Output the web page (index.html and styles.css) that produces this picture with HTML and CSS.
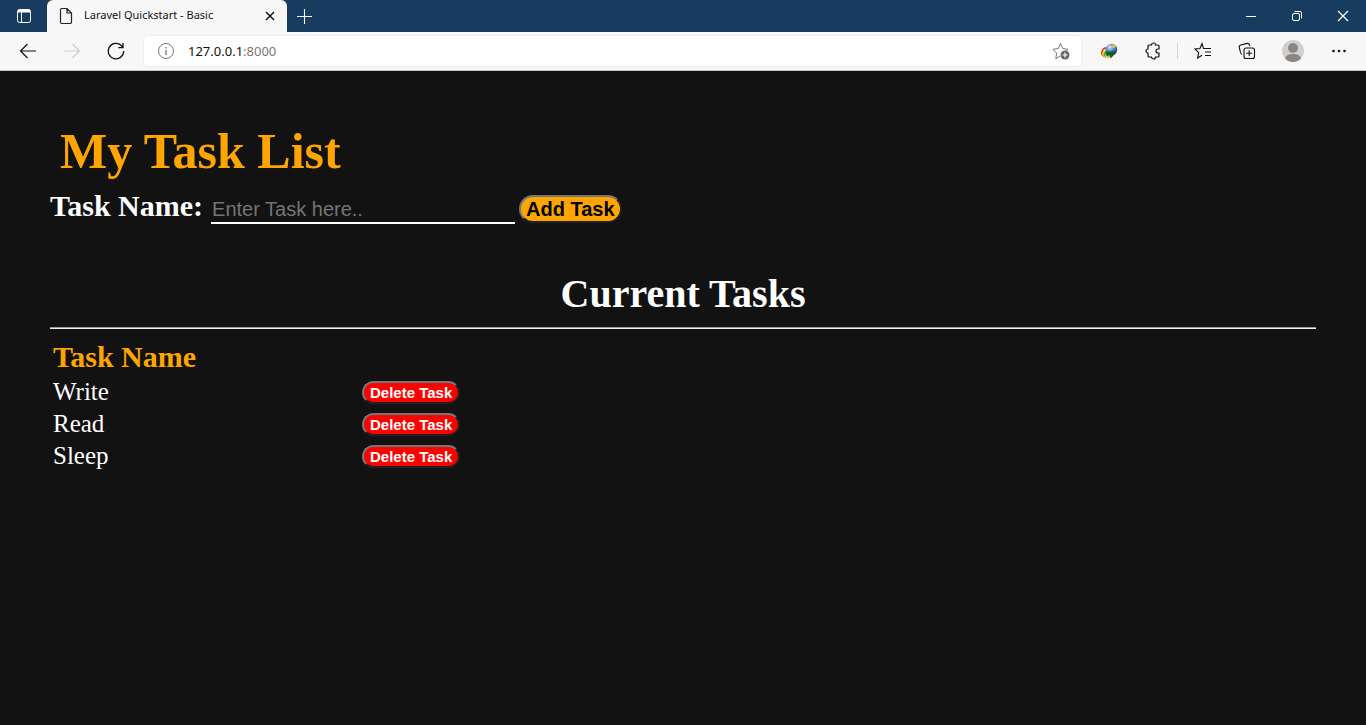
FILE: index.html
```html
<!DOCTYPE html>
<html lang="en">
<head>
<meta charset="utf-8">
<title>Laravel Quickstart - Basic</title>
<link rel="stylesheet" href="styles.css">
</head>
<body>
<header class="browser">
  <div class="titlebar">
    <button class="tab-actions" aria-label="Tab actions">
      <svg width="16" height="16" viewBox="0 0 16 16" fill="none" stroke="#fff"><rect x="1.500" y="1.500" width="13" height="13" rx="2"/><path d="M2 3h12" stroke-width="3"/><path d="M5.500 4v10"/></svg>
    </button>
    <div class="tab">
      <svg width="14" height="18" viewBox="0 0 14 18" fill="none" stroke="#222" stroke-width="1.200"><path d="M3 1.500h5l4.500 4.500v9a1.500 1.500 0 0 1-1.500 1.500H3A1.500 1.500 0 0 1 1.500 15V3A1.500 1.500 0 0 1 3 1.500zM8 1.500V6h4.500"/></svg>
      <span class="tab-title">Laravel Quickstart - Basic</span>
      <button class="tab-close" aria-label="Close tab">
        <svg width="10" height="10" viewBox="0 0 10 10" stroke="#111" stroke-width="1.500"><path d="M1 1l8 8M9 1l-8 8"/></svg>
      </button>
    </div>
    <button class="new-tab" aria-label="New tab">
      <svg width="15" height="15" viewBox="0 0 15 15" stroke="#fff" stroke-width="1.100"><path d="M7.500 0v15M0 7.500h15"/></svg>
    </button>
    <div class="window-controls">
      <button aria-label="Minimize"><svg width="12" height="12" viewBox="0 0 12 12" stroke="#fff"><path d="M1 6.500h10"/></svg></button>
      <button aria-label="Restore"><svg width="12" height="12" viewBox="0 0 12 12" fill="none" stroke="#fff"><rect x="1.500" y="3.500" width="7" height="7" rx="1.500"/><path d="M3.500 1.500H9A1.500 1.500 0 0 1 10.500 3v5.500"/></svg></button>
      <button aria-label="Close"><svg width="12" height="12" viewBox="0 0 12 12" stroke="#fff" stroke-width="1.200"><path d="M1 1l10 10M11 1L1 11"/></svg></button>
    </div>
  </div>
  <div class="toolbar">
    <button aria-label="Back"><svg width="18" height="16" viewBox="0 0 18 16" fill="none" stroke="#111" stroke-width="1.200"><path d="M8.500 1L1.500 8l7 7M1.500 8H17"/></svg></button>
    <button aria-label="Forward" disabled><svg width="18" height="16" viewBox="0 0 18 16" fill="none" stroke="#ccc" stroke-width="1.200"><path d="M9.500 1l7 7-7 7M16.500 8H1"/></svg></button>
    <button aria-label="Refresh"><svg width="18" height="18" viewBox="0 0 18 18" fill="none" stroke="#111" stroke-width="1.300"><path d="M16.700 9a7.700 7.700 0 1 1-2.400-5.500L16 5.500M16 1v4.700h-4.700"/></svg></button>
    <div class="address">
      <svg width="18" height="18" viewBox="0 0 18 18" fill="none" stroke="#777"><circle cx="9" cy="9" r="7.500"/><path d="M9 8v5M9 5v1.500" stroke-width="1.300"/></svg>
      <span class="url">127.0.0.1<span class="port">:8000</span></span>
      <button aria-label="Add to favorites">
        <svg width="18" height="18" viewBox="0 0 18 18" fill="none" stroke="#777"><path d="M8 14.200l-4.200 2.500.8-5.500L1 7.300l5.300-.8L8.500 1.500l2.200 5 5.300.8-2 2"/><circle cx="13" cy="13" r="4.500" fill="#666" stroke="none"/><path d="M13 10.500v5M10.500 13h5" stroke="#fff" stroke-width="1.200"/></svg>
      </button>
    </div>
    <div class="extensions">
      <button aria-label="Download manager">
        <svg width="18" height="16" viewBox="0 0 18 16" fill="none">
          <defs><radialGradient id="globe" cx=".35" cy=".3" r=".75"><stop offset="0" stop-color="#e4f2fa"/><stop offset=".4" stop-color="#5b94dd"/><stop offset="1" stop-color="#153c90"/></radialGradient></defs>
          <path d="M8 5C3 4 1 8 2 12" stroke="#e33b20" stroke-width="1.600"/><path d="M8 6.500C4 6 3 9 3.500 12" stroke="#f4d313" stroke-width="1.600"/><path d="M8 8c-3 0-3.500 2-3 5" stroke="#2fa53c" stroke-width="1.600"/><path d="M2 11.500c2 3 6 3 9 1.500" stroke="#d8a42b" stroke-width="1.600"/><circle cx="11.500" cy="6.500" r="5.700" fill="url(#globe)"/><path d="M11 2l3.500-.5 1.500 2.500-3 1.500z" fill="#dcc63c"/><path d="M5.500 9l10-1 .5 2-5.500 5.500-.5-3L6.500 13z" fill="#135f1c"/>
        </svg>
      </button>
      <button aria-label="Extensions">
        <svg width="18" height="18" viewBox="0 0 18 18" fill="none" stroke="#111" stroke-width="1.200" stroke-linejoin="round"><path d="M5 3h2.500a2 2 0 0 1 4 0H14a1 1 0 0 1 1 1v3h-1a2 2 0 0 0 0 4h1v3a1 1 0 0 1-1 1h-2.500a2 2 0 0 1-4 0H5a1 1 0 0 1-1-1v-3a2 2 0 0 1 0-4V4a1 1 0 0 1 1-1z"/></svg>
      </button>
    </div>
    <div class="tools">
      <button aria-label="Favorites">
        <svg width="18" height="18" viewBox="0 0 18 18" fill="none" stroke="#111" stroke-width="1.100"><path d="M12 6.500H9.500L8 1.500 6 6.500 1 7l3.700 3.600L3.600 16 8 13.300M11 6.500h6M11 10h6M11 13.500h6"/></svg>
      </button>
      <button aria-label="Collections">
        <svg width="18" height="18" viewBox="0 0 18 18" fill="none" stroke="#111" stroke-width="1.100"><rect x="6" y="6" width="10.500" height="10.500" rx="2"/><path d="M11.200 8.200v6M8.200 11.200h6M4 12.500C2.800 12 2.600 11 2.400 10L1.300 5.500c-.3-1.200.4-2.200 1.500-2.500L9 1.400c1-.2 2 .3 2.400 1.300l.4 1.300"/></svg>
      </button>
      <button class="profile" aria-label="Profile">
        <svg width="22" height="22" viewBox="0 0 22 22"><circle cx="11" cy="11" r="11" fill="#d2d0ce"/><circle cx="11" cy="8" r="5" fill="#8a8684"/><path d="M3 18.500c1-3.500 4-4.500 8-4.500s7 1 8 4.500a11 11 0 0 1-16 0z" fill="#8a8684"/></svg>
      </button>
      <button aria-label="Settings and more">
        <svg width="16" height="4" viewBox="0 0 16 4" fill="#111"><circle cx="2.500" cy="2" r="1.300"/><circle cx="8" cy="2" r="1.300"/><circle cx="13.500" cy="2" r="1.300"/></svg>
      </button>
    </div>
  </div>
</header>
<main class="page">
  <h1 class="title">My Task List</h1>
  <form class="task-form">
    <label for="task">Task Name:</label>
    <input id="task" type="text" placeholder="Enter Task here..">
    <button class="add" type="submit">Add Task</button>
  </form>
  <h2 class="subtitle">Current Tasks</h2>
  <hr class="rule">
  <table class="tasks">
    <thead><tr><th scope="col">Task Name</th><td></td></tr></thead>
    <tbody>
      <tr><td>Write</td><td><button class="delete">Delete Task</button></td></tr>
      <tr><td>Read</td><td><button class="delete">Delete Task</button></td></tr>
      <tr><td>Sleep</td><td><button class="delete">Delete Task</button></td></tr>
    </tbody>
  </table>
</main>
</body>
</html>
```

FILE: styles.css
```css
* { box-sizing: border-box; }

body {
  margin: 0;
  min-height: 100vh;
  display: flex;
  flex-direction: column;
  background: #121212;
  color: #fff;
  font-family: "Liberation Serif", "Times New Roman", serif;
}

/* Browser frame */
.browser {
  background: #f7f7f7;
  border-bottom: 1px solid #c4c8c4;
  color: #111;
  font-family: "Noto Sans", "Segoe UI", sans-serif;
}
.browser button {
  display: flex;
  align-items: center;
  justify-content: center;
  padding: 0;
  border: 0;
  background: none;
}
.browser svg { flex: none; display: block; }

.titlebar {
  display: flex;
  height: 32px;
  background: #173c5f;
}
.titlebar .tab-actions { width: 47px; }
.tab {
  display: flex;
  align-items: center;
  width: 240px;
  padding: 0 12px;
  gap: 11px;
  background: #f7f7f7;
  border-radius: 6px 6px 0 0;
}
.tab-title {
  flex: 1;
  font-size: 11px;
  line-height: 16px;
  padding-bottom: 2px;
  white-space: nowrap;
}
.browser .tab-close { width: 10px; height: 16px; }
.browser .new-tab { width: 35px; }
.window-controls { display: flex; margin-left: auto; }
.window-controls button { width: 46px; }

.toolbar {
  display: flex;
  align-items: center;
  height: 38px;
  padding-left: 6px;
}
.toolbar button { width: 44px; height: 30px; }
.address {
  flex: 1;
  display: flex;
  align-items: center;
  height: 30px;
  margin-left: 6px;
  padding-left: 13px;
  background: #fff;
  border-radius: 4px;
  box-shadow: 0 0 2px #ddd;
}
.address .url { flex: 1; margin-left: 13px; font-size: 13px; }
.address .port { color: #777; }
.address button { width: 40px; }
.extensions {
  display: flex;
  margin-left: 6px;
}
.extensions::after {
  content: "";
  width: 1px;
  height: 16px;
  margin: 7px 2px 0;
  background: #d4d4d4;
}
.tools { display: flex; padding-left: 1px; }
.toolbar .profile { width: 48px; }
.tools button:last-child { width: 49px; padding-right: 5px; }

/* Task page */
.page { padding: 50px; }
.title {
  margin: 0;
  padding: 1px 10px 0;
  color: orange;
  font-size: 50px;
  line-height: 58px;
}
.task-form {
  display: flex;
  align-items: flex-start;
  margin-top: 9px;
}
.task-form label {
  font-size: 30px;
  font-weight: bold;
  line-height: 34px;
}
.task-form input {
  width: 304px;
  margin: 7px 4px 0 8px;
  padding: 1px;
  border: 0;
  border-bottom: 2px solid #fff;
  background: transparent;
  color: #fff;
  font: 20px/24px "Liberation Sans", Arial, sans-serif;
}
.task-form input::placeholder { color: #757575; }
.add, .delete {
  padding: 1px 6px;
  border: 2px outset #767676;
  font-family: "Liberation Sans", Arial, sans-serif;
  font-weight: bold;
}
.add {
  margin-top: 6px;
  padding: 0 5px;
  border-radius: 20px;
  background: orange;
  color: #000;
  font-size: 20px;
  line-height: 24px;
}
.subtitle {
  margin: 47px 0 0;
  font-size: 40px;
  line-height: 46px;
  text-align: center;
}
.rule {
  margin: 10px 0 8px;
  border: 0;
  border-top: 1px solid #9a9a9a;
  border-bottom: 1px solid #eee;
}
.tasks {
  border-spacing: 2px;
  font-size: 25px;
  line-height: 28px;
}
.tasks th, .tasks td { padding: 1px; }
.tasks th {
  width: 307px;
  color: orange;
  font-size: 30px;
  line-height: 34px;
  text-align: left;
}
.delete {
  display: block;
  border-radius: 15px;
  background: red;
  color: #fff;
  font-size: 15px;
  line-height: 17px;
}
```
